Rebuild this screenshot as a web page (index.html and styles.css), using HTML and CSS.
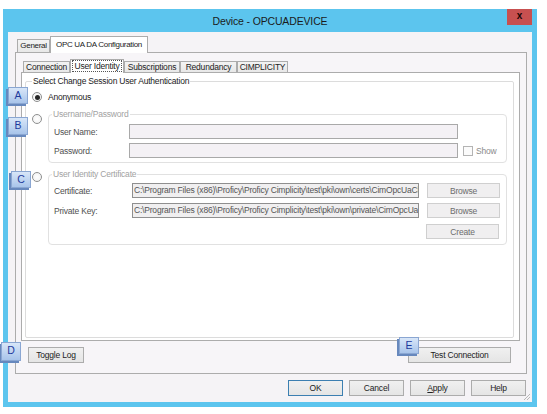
FILE: index.html
```html
<!DOCTYPE html>
<html>
<head>
<meta charset="utf-8">
<link rel="stylesheet" href="styles.css">
</head>
<body>
<div class="window">
  <div class="titlebar">
    <div class="title">Device - OPCUADEVICE</div>
    <div class="close">x</div>
  </div>
  <div class="client">
    <div class="tabs outer-tabs">
      <div class="tab t-general">General</div>
      <div class="tab active t-opc">OPC UA DA Configuration</div>
    </div>
    <div class="panel outer-panel">
      <div class="tabs inner-tabs">
        <div class="tab t-conn">Connection</div>
        <div class="tab active t-uid"><span class="focus">User Identity</span></div>
        <div class="tab t-sub">Subscriptions</div>
        <div class="tab t-red">Redundancy</div>
        <div class="tab t-cim">CIMPLICITY</div>
      </div>
      <div class="panel inner-panel">
        <fieldset class="group main-group">
          <legend>Select Change Session User Authentication</legend>
          <div class="opt opt-anon">
            <span class="radio checked"></span>
            <span class="opt-label">Anonymous</span>
          </div>
          <div class="opt opt-user">
            <span class="radio r-user"></span>
            <fieldset class="group sub-group user-group">
              <legend>Username/Password</legend>
              <div class="field-row first">
                <span class="flabel w-user">User Name:</span>
                <span class="textbox tb-user"></span>
              </div>
              <div class="field-row second">
                <span class="flabel w-user">Password:</span>
                <span class="textbox tb-user"></span>
                <span class="checkbox"></span>
                <span class="show">Show</span>
              </div>
            </fieldset>
          </div>
          <div class="opt opt-cert">
            <span class="radio r-cert"></span>
            <fieldset class="group sub-group cert-group">
              <legend>User Identity Certificate</legend>
              <div class="field-row first">
                <span class="flabel w-cert">Certificate:</span>
                <span class="textbox tb-cert"><span class="tb-text">C:\Program Files (x86)\Proficy\Proficy Cimplicity\test\pki\own\certs\CimOpcUaClient.der</span></span>
                <span class="btn btn-browse">Browse</span>
              </div>
              <div class="field-row second">
                <span class="flabel w-cert">Private Key:</span>
                <span class="textbox tb-cert"><span class="tb-text">C:\Program Files (x86)\Proficy\Proficy Cimplicity\test\pki\own\private\CimOpcUaClient.pem</span></span>
                <span class="btn btn-browse">Browse</span>
              </div>
              <div class="field-row third">
                <span class="btn btn-browse">Create</span>
              </div>
            </fieldset>
          </div>
        </fieldset>
      </div>
      <div class="panel-actions">
        <span class="btn btn-toggle">Toggle Log</span>
        <span class="btn btn-test">Test Connection</span>
      </div>
    </div>
    <div class="dialog-buttons">
      <span class="btn btn-dlg btn-default">OK</span>
      <span class="btn btn-dlg">Cancel</span>
      <span class="btn btn-dlg"><u>A</u>pply</span>
      <span class="btn btn-dlg">Help</span>
    </div>
    <svg class="grip" width="9" height="9" viewBox="0 0 9 9">
      <path d="M8 2 L2 8 M8 5 L5 8 M8 8 L8 8" stroke="#b8b8b8" stroke-width="1" fill="none"/>
    </svg>
  </div>
</div>

<div class="badge b-a">A</div>
<div class="badge b-b">B</div>
<div class="badge b-c">C</div>
<div class="badge b-d">D</div>
<div class="badge b-e">E</div>
</body>
</html>
```

FILE: styles.css
```css
* { box-sizing: border-box; }
html, body { margin: 0; padding: 0; }
body {
  width: 547px;
  height: 414px;
  overflow: hidden;
  background: #ffffff;
  position: relative;
  font-family: "Liberation Sans", Arial, sans-serif;
  font-size: 8.5px;
  letter-spacing: -0.2px;
  color: #222;
}

.window {
  margin: 9px 0 0 3px;
  width: 534px;
  height: 398px;
  background: #5cc5ee;
  padding: 0 5px 5px 5px;
  display: flex;
  flex-direction: column;
}

.titlebar {
  height: 23px;
  display: grid;
  grid-template-columns: 1fr auto 1fr;
  align-items: start;
}
.title {
  grid-column: 2;
  font-size: 10.5px;
  letter-spacing: -0.15px;
  line-height: 25px;
  color: #1b1b1b;
}
.close {
  grid-column: 3;
  justify-self: end;
  width: 25px;
  height: 16px;
  background: #c75050;
  color: #1a0505;
  font-weight: bold;
  font-size: 10px;
  letter-spacing: 0;
  line-height: 14px;
  text-align: center;
}

.client {
  flex: 1;
  background: #f5f3f6;
  padding: 4px 5px 0 7px;
  display: flex;
  flex-direction: column;
  position: relative;
}

/* tabs */
.tabs {
  display: flex;
  align-items: flex-end;
}
.tab {
  border: 1px solid #acacac;
  border-bottom: none;
  background: linear-gradient(#f3f3f3, #e8e8e8);
  text-align: center;
  white-space: nowrap;
  color: #222;
}
.tab.active {
  background: #ffffff;
  position: relative;
  z-index: 1;
  margin-bottom: -1px;
}
.outer-tabs {
  height: 16px;
  padding-left: 2px;
}
.outer-tabs .tab {
  height: 13px;
  line-height: 12px;
  font-size: 8px;
  letter-spacing: -0.3px;
}
.outer-tabs .tab.active {
  height: 17px;
  line-height: 15px;
  padding-bottom: 1px;
}
.t-general { width: 33px; }
.t-opc { width: 98px; }

.panel {
  border: 1px solid #acacac;
}
.outer-panel {
  width: 512px;
  height: 322px;
  background: #f7f5f8;
  padding: 6px 6px 0 5px;
  display: flex;
  flex-direction: column;
}
.inner-tabs {
  height: 13px;
  padding-left: 2px;
}
.inner-tabs .tab {
  height: 11px;
  line-height: 10px;
}
.inner-tabs .tab.active {
  height: 14px;
  line-height: 12px;
}
.t-conn { width: 47px; }
.t-uid { width: 54px; }
.t-sub { width: 56px; }
.t-red { width: 57px; }
.t-cim { width: 51px; }
.focus {
  outline: 1px dotted #555;
  outline-offset: 0;
  padding: 0 1px;
}

.inner-panel {
  width: 499px;
  height: 269px;
  background: #ffffff;
  padding: 0;
}

/* group boxes */
.group {
  margin: 0;
  padding: 0;
  min-width: 0;
  border: 1px solid #dcdcdc;
  border-radius: 2px;
}
.group legend {
  padding: 0 1px;
  line-height: 12px;
}
.main-group {
  margin: 2px 5px 0 3px;
  height: 263px;
}
.main-group > legend {
  margin-left: 6px;
  color: #222;
}
.opt {
  display: flex;
  align-items: flex-start;
  padding-left: 6px;
  gap: 6px;
}
.opt-anon {
  margin-top: 4px;
  align-items: center;
  height: 12px;
}
.opt-label { line-height: 12px; }
.opt-user { margin-top: 5px; margin-right: 6px; }
.opt-cert { margin-top: 5px; margin-right: 6px; }

.radio {
  flex: none;
  width: 10px;
  height: 10px;
  border: 1px solid #8e8f8f;
  border-radius: 50%;
  background: radial-gradient(circle, #ffffff 0%, #f0f0f0 100%);
  display: flex;
  align-items: center;
  justify-content: center;
}
.radio.checked::after {
  content: "";
  width: 5px;
  height: 5px;
  border-radius: 50%;
  background: #262626;
}
.r-user { margin-top: 6px; }
.r-cert { margin-top: 4px; }

.sub-group {
  flex: 1;
  border-color: #e1e1e1;
  border-radius: 4px;
}
.sub-group > legend {
  margin-left: 3px;
  color: #a2a2a2;
}
.user-group { padding-bottom: 4px; }
.cert-group { padding-bottom: 5px; padding-right: 7px; }

.field-row {
  display: flex;
  align-items: center;
  padding-left: 5px;
}
.user-group .field-row.first { margin-top: 4px; }
.user-group .field-row.second { margin-top: 4px; }
.cert-group .field-row.first { margin-top: 3px; }
.cert-group .field-row.second { margin-top: 5px; }
.cert-group .field-row.third { margin-top: 6px; justify-content: flex-end; }

.flabel {
  flex: none;
  color: #505050;
  line-height: 12px;
}
.w-user { width: 75px; }
.w-cert { width: 78px; }

.textbox {
  flex: none;
  height: 15px;
  border: 1px solid #a9a9a9;
  background: #f4f1f5;
  line-height: 13px;
  white-space: nowrap;
  overflow: hidden;
  color: #555;
  padding-left: 1px;
}
.tb-user { width: 329px; }
.tb-cert {
  width: 287px;
  background: #f0eff0;
  border-color: #8f8f8f;
}
.tb-text { display: block; overflow: hidden; }
.checkbox {
  flex: none;
  width: 10px;
  height: 10px;
  border: 1px solid #b4b4b4;
  background: #fbfbfb;
  margin-left: 5px;
}
.show {
  margin-left: 3px;
  color: #8a8a8a;
}

.btn {
  flex: none;
  display: flex;
  align-items: center;
  justify-content: center;
  height: 16px;
  border: 1px solid #acacac;
  background: linear-gradient(#f0f0f0, #e5e5e5);
  color: #222;
  white-space: nowrap;
}
.btn-browse {
  width: 73px;
  height: 15px;
  margin-left: 8px;
  border-color: #cfcfcf;
  background: #f0eff0;
  color: #6d6d6d;
}
.third .btn-browse { margin-left: 0; }

.panel-actions {
  display: flex;
  justify-content: space-between;
  margin-top: 6px;
  padding: 0 9px 0 7px;
}
.btn-toggle { width: 56px; }
.btn-test { width: 103px; }

.dialog-buttons {
  display: flex;
  justify-content: flex-end;
  gap: 6px;
  margin-top: 6px;
  padding-right: 1px;
}
.btn-dlg { width: 55px; }
.btn-default { border-color: #3c7fb1; }

.grip {
  position: absolute;
  right: 1px;
  bottom: 1px;
}

/* callout badges */
.badge {
  position: absolute;
  width: 20px;
  height: 17px;
  font-size: 10.5px;
  letter-spacing: 0;
  line-height: 15px;
  text-align: center;
  color: #1d3a9c;
  background: linear-gradient(#d8e6f8, #a8c4ea);
  border: 1px solid #8aa6d2;
  box-shadow: -2px 2px 0 #6788bd;
}
.b-a { left: 8px; top: 87px; }
.b-b { left: 8px; top: 117px; height: 18px; }
.b-c { left: 11px; top: 171px; }
.b-d { left: 1px; top: 342px; height: 19px; }
.b-e { left: 399px; top: 337px; }
```
